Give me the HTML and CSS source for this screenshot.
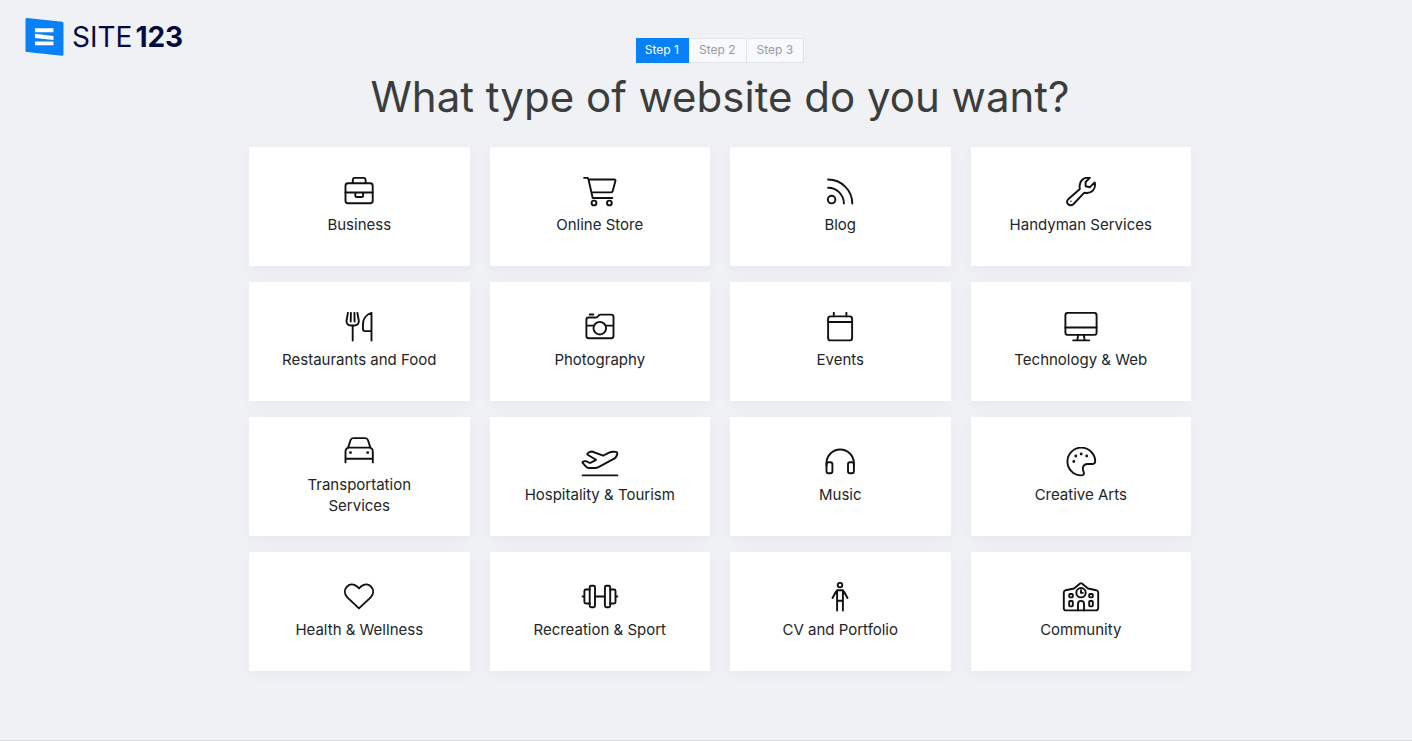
FILE: index.html
```html
<!DOCTYPE html>
<html lang="en">
<head>
<meta charset="utf-8">
<meta name="viewport" content="width=device-width, initial-scale=1">
<title>SITE123</title>
<link rel="stylesheet" href="styles.css">
</head>
<body>
<div class="page">
  <header class="header">
    <a class="logo" href="#">
      <svg class="logo-mark" viewBox="0 0 39 39" aria-hidden="true">
        <path fill="#0781f5" d="M1.5 0 37.500 3.800Q39 4 39 5.500V37.500Q39 39 37.500 38.800L1.500 35Q0 34.800 0 33.500V1.500Q0 0 1.500 0z"/>
        <path fill="#fff" d="M9.700 10.500h19v4h-19zM9.700 16.200l19 2.200v4.200l-19-2.200zM9.700 24h19v4h-19z"/>
      </svg>
      <span class="logo-text">SITE<b class="logo-number">123</b></span>
    </a>
    <ol class="steps">
      <li class="step step-active" aria-current="step">Step 1</li>
      <li class="step">Step 2</li>
      <li class="step">Step 3</li>
    </ol>
  </header>
  <main class="main">
    <h1 class="title">What type of website do you want?</h1>
    <div class="cards">
      <button class="card" type="button">
        <svg class="icon" viewBox="0 0 40 30"><rect x="6.500" y="6.200" width="27.200" height="20" rx="2.500"/><path d="M13.800 6V3Q13.800.9 15.900.9h8.600q2.100 0 2.100 2.100v3M6.500 15.500h27.200M16.300 15.500v3.200q0 1.300 1.300 1.300h5.200q1.300 0 1.300-1.300v-3.200"/></svg>
        <span class="label">Business</span>
      </button>
      <button class="card" type="button">
        <svg class="icon" viewBox="0 0 40 30"><path d="M4.200.9h2.900q1 0 1.300 1.200L12.700 21H32.300M8.600 2.500h25.500q1.700 0 1.300 1.600l-2.700 9.800q-.4 1.500-1.900 1.500H11.500"/><circle cx="14" cy="26" r="2.400"/><circle cx="29.400" cy="26" r="2.400"/></svg>
        <span class="label">Online Store</span>
      </button>
      <button class="card" type="button">
        <svg class="icon" viewBox="0 0 40 30"><circle cx="11.600" cy="22.600" r="3.800"/><path d="M8.100 10.800A15.800 15.800 0 0 1 23.900 26.600M8.100 2.500A24.200 24.200 0 0 1 32.300 26.600"/></svg>
        <span class="label">Blog</span>
      </button>
      <button class="card" type="button">
        <svg class="icon" viewBox="0 0 40 30"><path d="M7.200 22.300 18.900 12C17.300 4.600 22.200-.2 28.800.8L24.600 5v4.300l4.300.9 4.800-4.800C35.300 12 30.600 17.200 23.300 15.700L12.600 27C8.900 30.300 3.600 26 7.200 22.300z"/><circle class="dot" cx="9.900" cy="24.200" r=".8"/></svg>
        <span class="label">Handyman Services</span>
      </button>
      <button class="card" type="button">
        <svg class="icon" viewBox="0 0 40 30"><path d="M8.900.9 7.600 8.200C7 11.500 9.200 13.500 12 13.500h3.300c2.800 0 5-2 4.400-5.300L18.400.9M11.900.9l-.2 8.600M15.400.9l.2 8.600M13.700 13.500v15.100M32.500 28.600V.9C27.500 2.500 24 6.700 24 11.500V17q0 2.100 2.100 2.100h6.400"/></svg>
        <span class="label">Restaurants and Food</span>
      </button>
      <button class="card" type="button">
        <svg class="icon" viewBox="0 0 40 30"><path d="M8.700 5.500h7q1 0 1.700-.7l1.500-1.500q.8-.7 1.800-.7h10.500q2.300 0 2.300 2.300V24q0 2.200-2.300 2.200H8.700q-2.300 0-2.300-2.200V7.800q0-2.300 2.300-2.300zM9.700 2.500h3.700M6.400 13.600h7.400M25.800 13.600h7.700"/><circle cx="19.800" cy="16.200" r="6.300"/></svg>
        <span class="label">Photography</span>
      </button>
      <button class="card" type="button">
        <svg class="icon" viewBox="0 0 40 30"><rect x="8.100" y="4.400" width="24" height="24" rx="2.500"/><path d="M8.100 10h24M13.800.6v3.800M26.400.6v3.800"/></svg>
        <span class="label">Events</span>
      </button>
      <button class="card" type="button">
        <svg class="icon" viewBox="0 0 40 30"><rect x="4.400" y=".9" width="31.200" height="22" rx="2.500"/><path d="M4.400 15.500h31.200M17.200 22.900l-.9 5.500M22.800 22.900l.9 5.500M12.200 28.400h15.900"/></svg>
        <span class="label">Technology &amp; Web</span>
      </button>
      <button class="card" type="button">
        <svg class="icon" viewBox="0 0 40 30"><path d="M9.100 10.600 11.600 3Q12.300 1.100 14.300 1.100h11.900q2 0 2.700 1.900l2.500 7.600M6.500 25.400V14.700q0-4.100 4.100-4.100h19.100q4.100 0 4.100 4.100v10.700M6.500 21.700h27.300"/><circle class="dot" cx="11.500" cy="15.600" r="1.400"/><circle class="dot" cx="28.700" cy="15.600" r="1.400"/></svg>
        <span class="label">Transportation Services</span>
      </button>
      <button class="card" type="button">
        <svg class="icon" viewBox="0 0 40 30"><path d="M2.600 15.800Q2.300 15 3.200 14.700l1.700-.5q.8-.2 1.600.2l2.600 1.300q.9.400 1.800 0l5.100-2.900-8-4.800q-1.300-.9-.2-1.800l1.400-1Q10.300 4.500 12 4.500l11.100 4.100 5.400-2.700Q32 4.200 36 4.900q1.700.4 1.200 2.300-.8 3.500-4 5L18.500 20.100Q16.900 21 15 21H8.700Q7.300 21 6.300 19.900zM2.700 28.400h34.700"/></svg>
        <span class="label">Hospitality &amp; Tourism</span>
      </button>
      <button class="card" type="button">
        <svg class="icon" viewBox="0 0 40 30"><path d="M6.500 18.500v-2.400a13.700 13.600 0 0 1 27.400 0v2.400"/><rect x="6.500" y="15.300" width="5.900" height="11" rx="2"/><rect x="28" y="15.300" width="5.900" height="11" rx="2"/></svg>
        <span class="label">Music</span>
      </button>
      <button class="card" type="button">
        <svg class="icon" viewBox="0 0 40 30"><path d="M34.200 14.500A13.900 13.900 0 1 0 20 28.400c2.600.1 3.400-1.500 2.600-3.500-1.700-4.200-.4-7.900 4-7.900h4.700q2.700 0 2.900-2.500z"/><circle class="dot" cx="12.800" cy="14.500" r="1.400"/><circle class="dot" cx="14.800" cy="9" r="1.400"/><circle class="dot" cx="20.200" cy="7" r="1.400"/><circle class="dot" cx="25.700" cy="9" r="1.400"/></svg>
        <span class="label">Creative Arts</span>
      </button>
      <button class="card" type="button">
        <svg class="icon" viewBox="0 0 40 30"><path d="M20 26.400 8.300 15.400C1.500 8 10.500-1.600 17.700 4.300L20 6.400l2.300-2.100C29.500-1.600 38.500 8 31.700 15.400z"/></svg>
        <span class="label">Health &amp; Wellness</span>
      </button>
      <button class="card" type="button">
        <svg class="icon" viewBox="0 0 40 30"><rect x="9.700" y="3.800" width="5.300" height="21.400" rx="1.500"/><rect x="24.900" y="3.800" width="5.300" height="21.400" rx="1.500"/><path d="M9.700 7.500H5.900q-1.500 0-1.500 1.500v11q0 1.500 1.500 1.500h3.800M30.200 7.500H34q1.500 0 1.500 1.500v11q0 1.500-1.500 1.500h-3.800M15 14.500h9.900M2.600 14.500h1.800M35.500 14.500h1.800"/></svg>
        <span class="label">Recreation &amp; Sport</span>
      </button>
      <button class="card" type="button">
        <svg class="icon" viewBox="0 0 40 30"><circle cx="20" cy="3.100" r="2.300"/><path d="M17.100 28.500V8.300h5.800v20.200M17.100 18.700h5.800M12.500 16l3.300-6q1-1.700 3-1.700h2.400q2 0 3 1.700l3.300 6"/></svg>
        <span class="label">CV and Portfolio</span>
      </button>
      <button class="card" type="button">
        <svg class="icon" viewBox="0 0 40 30"><path d="M13 6.500 19.100 1.500q.9-.7 1.800 0L27 6.500l8.300 1.700q1.900.5 1.900 2.400V26q0 2.400-2.400 2.400H5.200q-2.400 0-2.400-2.400V10.600q0-1.900 1.900-2.400z"/><circle cx="20" cy="10.700" r="4.700"/><path d="M20 8.300v2.600h1.800M17 28.400v-6.500a3 3 0 0 1 6 0v6.500"/><rect x="8.200" y="12" width="3.600" height="3.400" rx=".8"/><rect x="28.200" y="12" width="3.600" height="3.400" rx=".8"/><rect x="8.200" y="19" width="3.600" height="5.400" rx=".8"/><rect x="28.200" y="19" width="3.600" height="5.400" rx=".8"/></svg>
        <span class="label">Community</span>
      </button>
    </div>
  </main>
</div>
</body>
</html>
```
FILE: styles.css
```css
* {
  box-sizing: border-box;
}

body {
  margin: 0;
  background: #f0f1f5;
  color: #212529;
  font-family: Inter, "Open Sans", sans-serif;
}

.page {
  min-height: 100vh;
  padding: 18px 0 0 28px;
  border-bottom: 1px solid #dcdddf;
}

.header {
  display: grid;
  grid-template-columns: 1fr auto 1fr;
  align-items: start;
}

.logo {
  display: flex;
  align-items: center;
  justify-self: start;
  gap: 8px;
  margin-left: -3px;
  color: #030b42;
  text-decoration: none;
}

.logo-mark {
  width: 39px;
  height: 38px;
}

.logo-text {
  font-size: 28px;
  line-height: 38px;
}

.logo-number {
  margin-left: 3px;
  font-weight: 700;
}

.steps {
  display: flex;
  margin: 20px 0 0;
  padding: 0;
  list-style: none;
}

.step {
  padding: 0 10px 1px;
  border: 1px solid #e3e4e7;
  border-left-width: 0;
  background: #f8f9fb;
  color: #999b9e;
  font-size: 12px;
  line-height: 22px;
}

.step-active {
  padding-left: 9px;
  padding-right: 9px;
  border-color: #0781f5;
  background: #0781f5;
  color: #fff;
}

.title {
  margin: 8px 0 24px;
  color: #3b3d3d;
  font-size: 42px;
  font-weight: 400;
  line-height: 52px;
  text-align: center;
}

.cards {
  display: grid;
  grid-template-columns: repeat(4, 1fr);
  gap: 16px 20px;
  max-width: 942px;
  margin: 0 auto;
}

.card {
  display: flex;
  flex-direction: column;
  align-items: center;
  justify-content: center;
  gap: 7px;
  min-height: 119px;
  padding: 12px 30px 13px;
  border: 0;
  background: #fff;
  box-shadow: 0 4px 16px rgba(30, 34, 60, 0.04);
  color: #212529;
  font: inherit;
  cursor: pointer;
}

.icon {
  width: 40px;
  height: 30px;
  fill: none;
  stroke: #111;
  stroke-width: 1.9;
  stroke-linecap: round;
  stroke-linejoin: round;
}

.dot {
  fill: #111;
  stroke: none;
}

.label {
  font-size: 15px;
  line-height: 21px;
}
```
